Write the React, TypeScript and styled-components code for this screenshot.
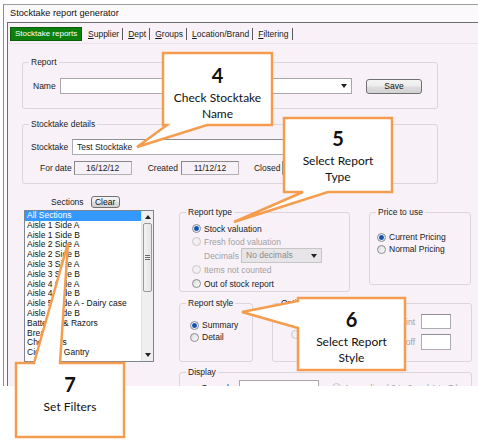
import React from "react";
import styled, { createGlobalStyle } from "styled-components";

const GlobalStyle = createGlobalStyle`
  html, body {
    margin: 0;
    padding: 0;
    background: #ffffff;
  }
  body {
    font-family: "Liberation Sans", Arial, sans-serif;
  }
  * {
    box-sizing: border-box;
  }
`;

const BG = "#f8f2f8";
const ORANGE = "#f59d4f";

const Page = styled.div`
  position: relative;
  width: 478px;
  height: 442px;
  overflow: hidden;
`;

const Window = styled.div`
  margin: 4px 0 0 3px;
  height: 382px;
  border-left: 1px solid #8c8c8c;
  border-top: 1px solid #9c9c9c;
  background: #fcf9fc;
  display: flex;
  flex-direction: column;
  overflow: hidden;
`;

const TitleBar = styled.div`
  height: 17px;
  padding-left: 6px;
  font-size: 9.2px;
  line-height: 17px;
  color: #111;
`;

const Body = styled.div`
  flex: 1;
  margin-left: 3px;
  border-left: 1px solid #6e6e6e;
  border-top: 1px solid #6e6e6e;
  background: ${BG};
  font-size: 8.5px;
  color: #1a1a1a;
  overflow: hidden;
`;

const TabStrip = styled.div`
  display: flex;
  align-items: center;
  padding: 4px 0 2px 2px;
  border-bottom: 1px solid #ece4ec;
`;

const ActiveTab = styled.div`
  width: 72px;
  height: 14px;
  padding-left: 4px;
  margin-right: 1px;
  font-size: 8px;
  line-height: 12px;
  background: #0d7f0d;
  border: 1px solid #0a5e0a;
  color: #ffffff;
  white-space: nowrap;
  overflow: hidden;
`;

const Tab = styled.div`
  height: 12px;
  line-height: 12px;
  padding: 0 3px 0 5px;
  border-right: 1px solid #5a5a5a;
  white-space: nowrap;
`;

const Panel = styled.div`
  padding: 18px 0 0 14px;
`;

const GroupBox = styled.div<{ $w: number; $h: number; $pt?: number; $pl?: number }>`
  position: relative;
  width: ${(p) => p.$w}px;
  height: ${(p) => p.$h}px;
  padding: ${(p) => p.$pt ?? 0}px 0 0 ${(p) => p.$pl ?? 0}px;
  border: 1px solid #dcd5dc;
  border-radius: 3px;
  flex-shrink: 0;
`;

const Caption = styled.span`
  position: absolute;
  top: -6px;
  left: 6px;
  padding: 0 2px;
  line-height: 11px;
  background: ${BG};
  white-space: nowrap;
`;

const Row = styled.div<{ $mt?: number; $pl?: number; $h?: number }>`
  display: flex;
  align-items: center;
  margin-top: ${(p) => p.$mt ?? 0}px;
  padding-left: ${(p) => p.$pl ?? 0}px;
  height: ${(p) => (p.$h ? `${p.$h}px` : "auto")};
`;

const FieldLabel = styled.span<{ $w?: number; $color?: string }>`
  width: ${(p) => (p.$w ? `${p.$w}px` : "auto")};
  color: ${(p) => p.$color ?? "inherit"};
  white-space: nowrap;
  flex-shrink: 0;
`;

const TextBox = styled.div<{ $w: number; $h?: number }>`
  position: relative;
  width: ${(p) => p.$w}px;
  height: ${(p) => p.$h ?? 16}px;
  padding-left: 4px;
  line-height: ${(p) => (p.$h ?? 16) - 2}px;
  background: #ffffff;
  border: 1px solid #abadb3;
  border-top-color: #8e9096;
  white-space: nowrap;
  flex-shrink: 0;
`;

const ComboBox = styled(TextBox)<{ $disabled?: boolean }>`
  background: ${(p) => (p.$disabled ? "#e7e5e7" : "#ffffff")};
  border-color: ${(p) => (p.$disabled ? "#c5c5c5" : "#a8a8a8")};
  color: ${(p) => (p.$disabled ? "#8c8c8c" : "inherit")};
  display: flex;
  align-items: center;
  justify-content: space-between;
  padding-right: 4px;
`;

const DateBox = styled.div`
  width: 58px;
  height: 14px;
  line-height: 12px;
  text-align: center;
  border: 1px solid #b4b0b4;
  border-top-color: #8a878a;
  border-left-color: #8a878a;
  background: #f6f1f6;
  flex-shrink: 0;
`;

const Button = styled.div<{ $w: number; $h: number; $ml?: number }>`
  width: ${(p) => p.$w}px;
  height: ${(p) => p.$h}px;
  margin-left: ${(p) => p.$ml ?? 0}px;
  line-height: ${(p) => p.$h - 2}px;
  text-align: center;
  border: 1px solid #707070;
  border-radius: 3px;
  background: linear-gradient(#f4f4f4, #ececec 48%, #dedede 52%, #d2d2d2);
  color: #111;
  flex-shrink: 0;
`;

const Lower = styled.div`
  display: flex;
  align-items: flex-start;
  margin-top: 12px;
`;

const LeftCol = styled.div`
  margin-left: 2px;
  width: 130px;
  flex-shrink: 0;
`;

const SectionsHeader = styled.div`
  display: flex;
  align-items: center;
  gap: 7px;
  height: 12px;
  padding-left: 27px;
  margin-bottom: 2px;
`;

const ListBox = styled.div`
  display: flex;
  width: 130px;
  height: 152px;
  background: #ffffff;
  border: 1px solid #7f8590;
`;

const ListItems = styled.div`
  flex: 1;
  overflow: hidden;
`;

const ListItem = styled.div<{ $selected?: boolean }>`
  height: 9.8px;
  line-height: 9.8px;
  padding-left: 2px;
  white-space: nowrap;
  background: ${(p) => (p.$selected ? "#3399ff" : "transparent")};
  color: ${(p) => (p.$selected ? "#ffffff" : "#111")};
`;

const ScrollBar = styled.div`
  width: 12px;
  display: flex;
  flex-direction: column;
  background: #f0eff0;
  border-left: 1px solid #e2e2e2;
`;

const ScrollArrow = styled.div`
  height: 12px;
  display: flex;
  align-items: center;
  justify-content: center;
`;

const ScrollThumb = styled.div`
  height: 69px;
  margin: 0 1px;
  border: 1px solid #9a9a9a;
  border-radius: 2px;
  background: linear-gradient(90deg, #f2f2f2, #e4e4e4);
  display: flex;
  flex-direction: column;
  align-items: center;
  justify-content: center;
  gap: 1px;
`;

const ScrollTrack = styled.div`
  flex: 1;
`;

const Grip = styled.span`
  width: 5px;
  height: 1px;
  background: #6b6b6b;
`;

const RightCol = styled.div`
  margin-left: 25px;
  padding-top: 16px;
  width: 293px;
  flex-shrink: 0;
`;

const GroupRow = styled.div<{ $mt?: number }>`
  display: flex;
  align-items: flex-start;
  gap: 19px;
  margin-top: ${(p) => p.$mt ?? 0}px;
`;

const RadioList = styled.div`
  display: flex;
  flex-direction: column;
`;

const RadioRow = styled.div<{ $h: number; $disabled?: boolean }>`
  display: flex;
  align-items: center;
  gap: 3px;
  height: ${(p) => p.$h}px;
  color: ${(p) => (p.$disabled ? "#a3a0a3" : "#1a1a1a")};
  white-space: nowrap;
`;

const RadioDot = styled.span<{ $checked?: boolean; $disabled?: boolean }>`
  width: 9px;
  height: 9px;
  border-radius: 50%;
  flex-shrink: 0;
  border: 1px solid ${(p) => (p.$disabled ? "#c9c6c9" : "#8a8c8f")};
  background: ${(p) =>
    p.$checked
      ? "radial-gradient(circle, #1d4fa4 0 1.8px, #5f95da 2.4px, #e6eef9 3px, #ffffff 100%)"
      : p.$disabled
      ? "#f3f0f3"
      : "linear-gradient(135deg, #d9d9d9, #ffffff)"};
`;

const OptionsBody = styled.div`
  display: flex;
  justify-content: space-between;
  padding: 10px 20px 0 18px;
`;

const OptionsLeft = styled.div`
  padding-top: 14px;
`;

const OptionFields = styled.div`
  display: flex;
  flex-direction: column;
  gap: 5px;
`;

const OptionField = styled.div`
  display: flex;
  align-items: center;
  justify-content: flex-end;
  gap: 6px;
  color: #a3a0a3;
`;

const Overlay = styled.svg`
  position: absolute;
  left: 0;
  top: 0;
  pointer-events: none;
`;

const CalloutText = styled.div<{ $x: number; $y: number; $w: number; $h: number; $pt: number }>`
  position: absolute;
  left: ${(p) => p.$x}px;
  top: ${(p) => p.$y}px;
  width: ${(p) => p.$w}px;
  height: ${(p) => p.$h}px;
  padding-top: ${(p) => p.$pt}px;
  text-align: center;
  font-family: Lato, "Open Sans", sans-serif;
  color: #111;
`;

const CalloutNum = styled.div`
  font-size: 20px;
  font-weight: 700;
  line-height: 29px;
`;

const CalloutLine = styled.div`
  font-size: 12px;
  line-height: 15.5px;
`;

const Arrow = ({ up }: { up?: boolean }) => (
  <svg width="6" height="4" viewBox="0 0 6 4">
    <path d={up ? "M0 4 L3 0 L6 4 Z" : "M0 0 L6 0 L3 4 Z"} fill="#222" />
  </svg>
);

const Radio = ({
  label,
  checked,
  disabled,
  h = 12,
}: {
  label?: string;
  checked?: boolean;
  disabled?: boolean;
  h?: number;
}) => (
  <RadioRow $h={h} $disabled={disabled}>
    <RadioDot $checked={checked} $disabled={disabled} />
    {label && <span>{label}</span>}
  </RadioRow>
);

const sections = [
  "All Sections",
  "Aisle 1 Side A",
  "Aisle 1 Side B",
  "Aisle 2 Side A",
  "Aisle 2 Side B",
  "Aisle 3 Side A",
  "Aisle 3 Side B",
  "Aisle 4 Side A",
  "Aisle 4 Side B",
  "Aisle 5 Side A - Dairy case",
  "Aisle 5 Side B",
  "Batteries & Razors",
  "Bread",
  "Chemicals",
  "Cigarette Gantry",
];

const tabs = ["Supplier", "Dept", "Groups", "Location/Brand", "Filtering"];

const callouts = [
  {
    num: "4",
    lines: ["Check Stocktake", "Name"],
    box: [163, 53, 109, 72],
    pt: 8,
    points: "163,53 272,53 272,125 207,125 137,147 167,125 163,125",
  },
  {
    num: "5",
    lines: ["Select Report", "Type"],
    box: [284, 118, 108, 74],
    pt: 6,
    points: "284,118 392,118 392,192 328,192 234,222 303,192 284,192",
  },
  {
    num: "6",
    lines: ["Select Report", "Style"],
    box: [298, 298, 107, 72],
    pt: 7,
    points: "298,298 405,298 405,370 298,370 298,328 242,312 298,301",
  },
  {
    num: "7",
    lines: ["Set Filters"],
    box: [16, 363, 108, 74],
    pt: 7,
    points: "16,363 34,363 68,243 60,363 124,363 124,437 16,437",
  },
];

export default function App() {
  return (
    <Page>
      <GlobalStyle />
      <Window>
        <TitleBar>Stocktake report generator</TitleBar>
        <Body>
          <TabStrip>
            <ActiveTab>Stocktake reports</ActiveTab>
            {tabs.map((t) => (
              <Tab key={t}>
                <u>{t[0]}</u>
                {t.slice(1)}
              </Tab>
            ))}
          </TabStrip>

          <Panel>
            <GroupBox $w={416} $h={47} $pt={15} $pl={10}>
              <Caption>Report</Caption>
              <Row>
                <FieldLabel $w={27}>Name</FieldLabel>
                <ComboBox $w={292}>
                  <span />
                  <Arrow />
                </ComboBox>
                <Button $w={56} $h={15} $ml={14}>
                  Save
                </Button>
              </Row>
            </GroupBox>

            <Row $mt={15}>
              <GroupBox $w={416} $h={60} $pt={14} $pl={8}>
                <Caption>Stocktake details</Caption>
                <Row>
                  <FieldLabel $w={41}>Stocktake</FieldLabel>
                  <TextBox $w={270}>Test Stocktake</TextBox>
                </Row>
                <Row $mt={6} $pl={9} $h={14}>
                  <FieldLabel>For date</FieldLabel>
                  <Row $pl={2}>
                    <DateBox>16/12/12</DateBox>
                  </Row>
                  <Row $pl={16}>
                    <FieldLabel>Created</FieldLabel>
                  </Row>
                  <Row $pl={3}>
                    <DateBox>11/12/12</DateBox>
                  </Row>
                  <Row $pl={15}>
                    <FieldLabel>Closed</FieldLabel>
                  </Row>
                  <Row $pl={2}>
                    <DateBox />
                  </Row>
                </Row>
              </GroupBox>
            </Row>

            <Lower>
              <LeftCol>
                <SectionsHeader>
                  <span>Sections</span>
                  <Button $w={29} $h={12}>
                    Clear
                  </Button>
                </SectionsHeader>
                <ListBox>
                  <ListItems>
                    {sections.map((s, i) => (
                      <ListItem key={s} $selected={i === 0}>
                        {s}
                      </ListItem>
                    ))}
                  </ListItems>
                  <ScrollBar>
                    <ScrollArrow>
                      <Arrow up />
                    </ScrollArrow>
                    <ScrollThumb>
                      <Grip />
                      <Grip />
                      <Grip />
                    </ScrollThumb>
                    <ScrollTrack />
                    <ScrollArrow>
                      <Arrow />
                    </ScrollArrow>
                  </ScrollBar>
                </ListBox>
              </LeftCol>

              <RightCol>
                <GroupRow>
                  <GroupBox $w={171} $h={80} $pt={9} $pl={12}>
                    <Caption>Report type</Caption>
                    <RadioList>
                      <Radio label="Stock valuation" checked h={13} />
                      <Radio label="Fresh food valuation" disabled h={13} />
                      <Row $h={15}>
                        <Row $pl={12}>
                          <FieldLabel $w={37} $color="#a3a0a3">
                            Decimals
                          </FieldLabel>
                        </Row>
                        <ComboBox $w={81} $h={15} $disabled>
                          <span>No decimals</span>
                          <Arrow />
                        </ComboBox>
                      </Row>
                      <Radio label="Items not counted" disabled h={13} />
                      <Radio label="Out of stock report" h={15} />
                    </RadioList>
                  </GroupBox>
                  <GroupBox $w={102} $h={73} $pt={18} $pl={7}>
                    <Caption>Price to use</Caption>
                    <RadioList>
                      <Radio label="Current Pricing" checked />
                      <Radio label="Normal Pricing" />
                    </RadioList>
                  </GroupBox>
                </GroupRow>

                <GroupRow $mt={11}>
                  <GroupBox $w={74} $h={59} $pt={15} $pl={10}>
                    <Caption>Report style</Caption>
                    <RadioList>
                      <Radio label="Summary" checked />
                      <Radio label="Detail" />
                    </RadioList>
                  </GroupBox>
                  <GroupBox $w={200} $h={59}>
                    <Caption>Options</Caption>
                    <OptionsBody>
                      <OptionsLeft>
                        <Radio disabled />
                      </OptionsLeft>
                      <OptionFields>
                        <OptionField>
                          <span>Lines to print</span>
                          <TextBox $w={30} $h={15} />
                        </OptionField>
                        <OptionField>
                          <span>Cut off</span>
                          <TextBox $w={30} $h={16} />
                        </OptionField>
                      </OptionFields>
                    </OptionsBody>
                  </GroupBox>
                </GroupRow>

                <GroupRow $mt={10}>
                  <GroupBox $w={293} $h={40} $pt={7} $pl={21}>
                    <Caption>Display</Caption>
                    <Row>
                      <FieldLabel $w={38}>Group by</FieldLabel>
                      <ComboBox $w={80} $h={15}>
                        <span />
                        <Arrow />
                      </ComboBox>
                      <Row $pl={13}>
                        <Radio label="Ascending ( 0 to 9 and A to Z )" disabled h={15} />
                      </Row>
                    </Row>
                  </GroupBox>
                </GroupRow>
              </RightCol>
            </Lower>
          </Panel>
        </Body>
      </Window>

      <Overlay width="478" height="442" viewBox="0 0 478 442">
        {callouts.map((c) => (
          <polygon
            key={c.num}
            points={c.points}
            fill="#ffffff"
            stroke={ORANGE}
            strokeWidth="2.5"
            strokeLinejoin="miter"
          />
        ))}
      </Overlay>
      {callouts.map((c) => (
        <CalloutText
          key={c.num}
          $x={c.box[0]}
          $y={c.box[1]}
          $w={c.box[2]}
          $h={c.box[3]}
          $pt={c.pt}
        >
          <CalloutNum>{c.num}</CalloutNum>
          {c.lines.map((l) => (
            <CalloutLine key={l}>{l}</CalloutLine>
          ))}
        </CalloutText>
      ))}
    </Page>
  );
}
